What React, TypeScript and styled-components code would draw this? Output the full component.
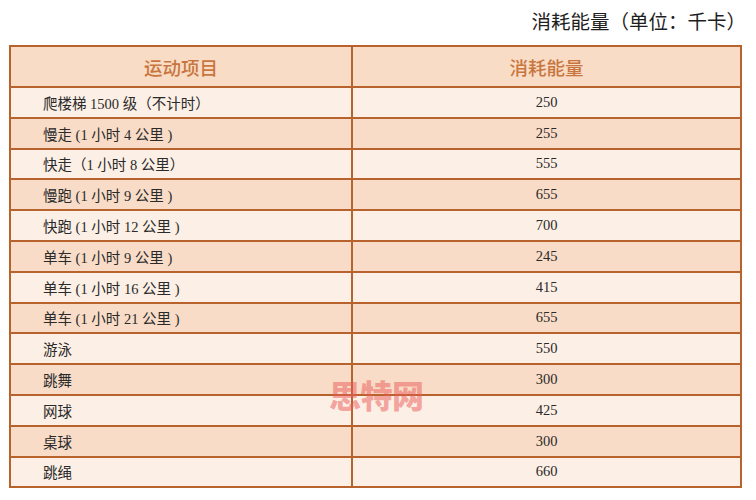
import styled, { createGlobalStyle } from 'styled-components';

const GlobalStyle = createGlobalStyle`
  html, body {
    margin: 0;
    padding: 0;
    background: #ffffff;
  }
`;

const Page = styled.div`
  width: 756px;
  height: 500px;
  box-sizing: border-box;
  padding: 7px 14px 0 9px;
  position: relative;
  overflow: hidden;
`;

const Title = styled.div`
  text-align: right;
  padding-right: 0;
  margin-right: -4px;
  height: 38px;
  font-family: 'Noto Sans CJK SC', sans-serif;
  font-size: 19.5px;
  line-height: 27px;
  color: #1e1e1e;
`;

const Table = styled.table`
  border-collapse: collapse;
  width: 733px;
  border: 2px solid #b8632d;
  table-layout: fixed;
`;

const TH = styled.th`
  height: 39px;
  padding: 0;
  background-color: #f8dcc6;
  border: 2px solid #b8632d;
  color: #c9763e;
  font-family: 'Noto Sans CJK SC', sans-serif;
  font-weight: 500;
  font-size: 18.5px;
  text-align: center;
`;

const TR = styled.tr<{ $shade: boolean }>`
  background-color: ${(p) => (p.$shade ? '#f8dcc7' : '#fcefe5')};
`;

const TD = styled.td<{ $center?: boolean }>`
  height: 28.8px;
  padding: 0 0 0 ${(p) => (p.$center ? '0' : '32px')};
  border: 2px solid #b8632d;
  font-family: 'Liberation Serif', 'Noto Sans CJK SC', serif;
  font-size: 14.5px;
  color: #2a2a2a;
  text-align: ${(p) => (p.$center ? 'center' : 'left')};
  white-space: nowrap;
`;

const Watermark = styled.div`
  position: absolute;
  left: 329px;
  top: 371px;
  font-family: 'Noto Sans CJK SC', sans-serif;
  font-weight: 900;
  font-size: 32px;
  letter-spacing: -0.5px;
  color: rgba(235, 90, 90, 0.5);
  pointer-events: none;
`;

const rows: [string, number][] = [
  ['爬楼梯 1500 级（不计时）', 250],
  ['慢走 (1 小时 4 公里 )', 255],
  ['快走（1 小时 8 公里）', 555],
  ['慢跑 (1 小时 9 公里 )', 655],
  ['快跑 (1 小时 12 公里 )', 700],
  ['单车 (1 小时 9 公里 )', 245],
  ['单车 (1 小时 16 公里 )', 415],
  ['单车 (1 小时 21 公里 )', 655],
  ['游泳', 550],
  ['跳舞', 300],
  ['网球', 425],
  ['桌球', 300],
  ['跳绳', 660],
];

export default function App(): JSX.Element {
  return (
    <Page>
      <GlobalStyle />
      <Title>消耗能量（单位：千卡）</Title>
      <Table>
        <colgroup>
          <col style={{ width: 342 }} />
          <col />
        </colgroup>
        <thead>
          <tr>
            <TH>运动项目</TH>
            <TH>消耗能量</TH>
          </tr>
        </thead>
        <tbody>
          {rows.map(([name, kcal], i) => (
            <TR key={name + i} $shade={i % 2 === 1}>
              <TD>{name}</TD>
              <TD $center>{kcal}</TD>
            </TR>
          ))}
        </tbody>
      </Table>
      <Watermark>思特网</Watermark>
    </Page>
  );
}
